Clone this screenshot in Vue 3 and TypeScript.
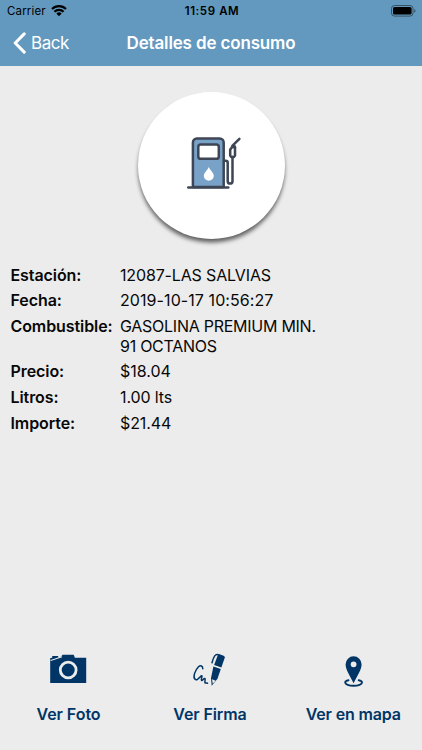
<script setup lang="ts">
interface Detail {
  key: string
  label: string
  value: string
}

const details: Detail[] = [
  { key: 'station', label: 'Estación:', value: '12087-LAS SALVIAS' },
  { key: 'date', label: 'Fecha:', value: '2019-10-17 10:56:27' },
  { key: 'fuel', label: 'Combustible:', value: 'GASOLINA PREMIUM MIN. 91 OCTANOS' },
  { key: 'price', label: 'Precio:', value: '$18.04' },
  { key: 'litres', label: 'Litros:', value: '1.00 lts' },
  { key: 'amount', label: 'Importe:', value: '$21.44' },
]
</script>

<template>
  <div class="screen">
    <header class="top">
      <div class="status">
        <div class="carrier">
          <span>Carrier</span>
          <svg class="wifi" width="16" height="12" viewBox="0 0 16 12">
            <path d="M1 4a10 10 0 0 1 14 0M3.4 6.7a6.6 6.6 0 0 1 9.2 0" fill="none" stroke="#000" stroke-width="2.1" />
            <path d="M8 11.2 5.3 8.6a3.900 3.900 0 0 1 5.400 0z" fill="#000" />
          </svg>
        </div>
        <span class="clock">11:59 AM</span>
        <svg class="battery" width="26" height="12" viewBox="0 0 26 12">
          <rect x="0.5" y="0.5" width="21.5" height="10.6" rx="3" fill="none" stroke="#345265" />
          <rect x="2" y="2" width="18.6" height="7.6" rx="1.6" fill="#000" />
          <path d="M23.3 4v3.8c1.7-.6 1.7-3.2 0-3.8z" fill="#345265" />
        </svg>
      </div>
      <nav class="nav">
        <a class="back">
          <svg width="13" height="22" viewBox="0 0 13 22">
            <path d="M11.2 1.9 2.2 11l9 9.1" fill="none" stroke="#fff" stroke-width="3" stroke-linecap="round" stroke-linejoin="round" />
          </svg>
          <span>Back</span>
        </a>
        <h1>Detalles de consumo</h1>
        <span></span>
      </nav>
    </header>

    <main>
      <div class="badge">
        <svg width="56" height="54" viewBox="0 0 56 54" fill="none" stroke="#3e4655" stroke-width="2.5" stroke-linecap="round" stroke-linejoin="round">
          <path d="M6.9 51V6.5a4 4 0 0 1 4-4h22.800a4 4 0 0 1 4 4V51z" fill="#78a2c8" />
          <rect x="12.3" y="8.600" width="20.500" height="14.200" rx="2.4" fill="#fff" />
          <path d="M2.300 51.4h40" />
          <path d="M22.800 31c-1 3-5 5.700-5 8.800a5 5 0 0 0 10 0C27.800 36.700 23.800 34 22.800 31z" fill="#fff" stroke="none" />
          <path d="M38 24.800h1.700a2 2 0 0 1 2 2v18.400a2.400 2.400 0 0 0 4.800 0V21" />
          <path d="M44.200 19.600v-6l2.500-3.200 2.300 1.500v7.700l-1 1.300h-2.800zM46.300 9.800 53.400 2.800M44.500 13.300l3.200-4.700 1.500 3" />
        </svg>
      </div>

      <dl class="details">
        <div v-for="d in details" :key="d.key" class="row" :class="d.key">
          <dt>{{ d.label }}</dt>
          <dd>{{ d.value }}</dd>
        </div>
      </dl>
    </main>

    <footer class="actions">
      <a class="action photo">
        <svg width="38" height="40" viewBox="0.8 0 38 40">
          <path d="M1 8 11 7.200 13.500 4.700h11l1.200 3H37v25.300H1z" fill="#003566" />
          <path d="M3 6h6v1.500L3 9z" fill="#003566" />
          <path d="M1.500 10.500 12.800 6.800" stroke="#ececec" stroke-width="1.100" />
          <circle cx="19" cy="20" r="7.900" fill="#003566" stroke="#ececec" stroke-width="2.800" />
        </svg>
        <span>Ver Foto</span>
      </a>
      <a class="action sign">
        <svg width="38" height="40" viewBox="0 0 38 40">
          <path d="M11.800 18.800C11.800 16 9.600 14.800 7.300 17c-2.800 3-5.700 9.300-3.500 12.100 2 2.300 4.300-1.300 6.500-3.200 1.900-1-1 4.100.3 4.600 1.200.3 2-2.500 3.200-2 1.300.8-.8 3.500.3 4.500.7.400 1.500-.5 2.400.2" fill="none" stroke="#003566" stroke-width="1.500" stroke-linecap="round" stroke-linejoin="round" />
          <path d="m22.400 16.400 7.400 2.600-3.300 9.700-5.800 7-.7-7.700z" fill="#003566" />
          <path d="m23.100 14.900 3.700-9.700 1.200-1.300 5.200 2 .6 1.700-3.400 10z" fill="#003566" />
          <path d="m21 29.200 3.700 1.500-3 3.100z" fill="#ececec" />
          <path d="M27.300 4.800c-2.700-1.300-4.700 1.500-6.300 8" fill="none" stroke="#003566" stroke-width="1.500" stroke-linecap="round" />
        </svg>
        <span>Ver Firma</span>
      </a>
      <a class="action map">
        <svg width="38" height="40" viewBox="0 0 38 40">
          <path d="M14.500 30.200c-2.200.5-3.300 1.200-3.300 2.200 0 1.900 3.700 3.400 8.400 3.400s8.400-1.500 8.400-3.400c0-1-1.100-1.700-3.300-2.200" fill="none" stroke="#003566" stroke-width="1.900" stroke-linecap="round" />
          <path fill-rule="evenodd" d="M19.600 6.300a8 8 0 0 0-8 8c0 5.900 4.800 12 8 19 3.200-7 8-13.100 8-19a8 8 0 0 0-8-8zm0 5.100a2.900 2.900 0 1 1 0 5.800 2.900 2.900 0 0 1 0-5.800z" fill="#003566" />
        </svg>
        <span>Ver en mapa</span>
      </a>
    </footer>
  </div>
</template>

<style>
body {
  background: #ececec;
}
</style>

<style scoped>
.screen {
  display: flex;
  flex-direction: column;
  height: 750px;
  overflow: hidden;
  box-sizing: border-box;
  background: #ececec;
  color: #080808;
  font-family: Inter, "Liberation Sans", sans-serif;
}
.top {
  height: 65.5px;
  flex: none;
  background: #6399be;
}
.status {
  display: grid;
  grid-template-columns: 1fr auto 1fr;
  align-items: center;
  height: 22px;
  padding: 0 5px 0 7px;
  font-size: 11.5px;
  color: #000;
}
.carrier {
  display: flex;
  align-items: center;
  gap: 5px;
  letter-spacing: 0.15px;
}
.wifi {
  margin-top: -1px;
}
.clock {
  font-weight: 600;
  letter-spacing: 0.6px;
}
.battery {
  justify-self: end;
}
.nav {
  display: grid;
  grid-template-columns: 1fr auto 1fr;
  align-items: center;
  height: 42px;
  padding: 0 13px;
  color: #fff;
}
.back {
  display: flex;
  align-items: center;
  gap: 5px;
  font-size: 17px;
  letter-spacing: -0.45px;
}
h1 {
  margin: 0;
  font-size: 17px;
  font-weight: 600;
  letter-spacing: -0.15px;
}
main {
  flex: 1;
}
.badge {
  display: flex;
  align-items: center;
  justify-content: center;
  box-sizing: border-box;
  width: 147px;
  height: 147px;
  margin: 26px auto 0;
  padding: 0 0 5px 5px;
  border-radius: 50%;
  background: #fff;
  box-shadow: 0 4px 4px -0.5px rgba(0, 0, 0, 0.6);
}
.details {
  display: flex;
  flex-direction: column;
  gap: 6.5px;
  margin: 27.2px 0 0;
  padding-left: 10.5px;
}
.row {
  display: grid;
  grid-template-columns: 109.5px 208px;
  font-size: 16px;
  line-height: 19.300px;
}
dt {
  font-weight: 600;
  white-space: nowrap;
  letter-spacing: -0.08px;
}
dd {
  margin: 0;
}
.station dd {
  letter-spacing: -0.15px;
}
.date dd {
  letter-spacing: 0.08px;
}
.fuel dd {
  letter-spacing: -0.26px;
}
.litres dd,
.amount dd {
  letter-spacing: -0.12px;
}
.actions {
  display: grid;
  grid-template-columns: 137px 146px 1fr;
  height: 100px;
  flex: none;
}
.action {
  display: flex;
  flex-direction: column;
  align-items: center;
  gap: 14px;
  color: #003566;
  font-size: 16px;
  line-height: 20px;
  font-weight: 600;
}
.photo span {
  letter-spacing: -0.05px;
}
.sign span {
  letter-spacing: -0.1px;
}
.map span {
  letter-spacing: -0.15px;
  padding-left: 1.5px;
}
</style>
